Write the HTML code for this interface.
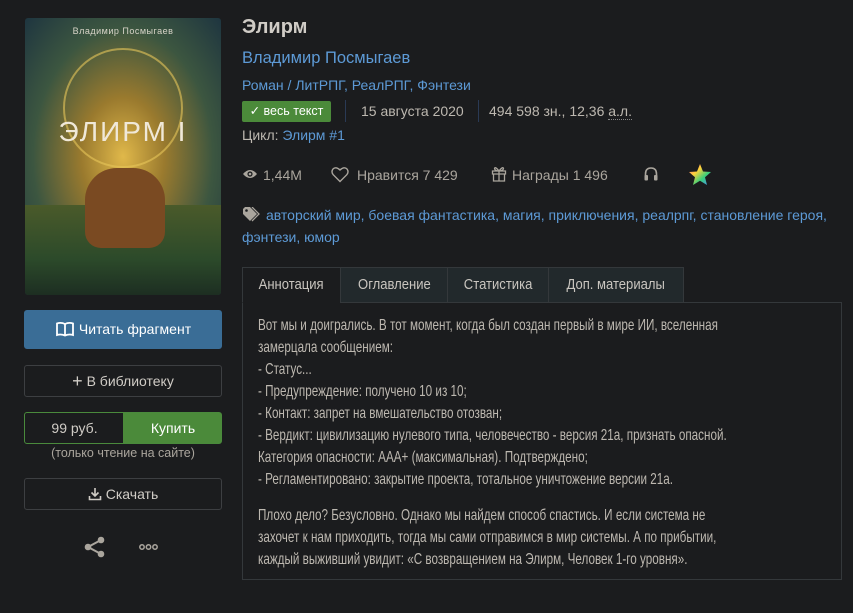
<!DOCTYPE html>
<html><head><meta charset="utf-8"><style>
*{margin:0;padding:0;box-sizing:border-box}
body{width:853px;height:613px;background:#1b1c1e;font-family:"Liberation Sans",sans-serif;color:#bdb8b0;position:relative;overflow:hidden;font-size:14px}
.a{position:absolute;white-space:nowrap}
.l{color:#5d9ad6}
.btn{position:absolute;left:24px;width:198px;border:1px solid #3d3f42;border-radius:3px;text-align:center;color:#d0ccc6}
.tab{position:absolute;top:267px;height:36px;border:1px solid #34383b;background:#22292c;line-height:34px;text-align:center;color:#c9c5bf;font-size:14.5px}
.tab span{display:inline-block;transform:scaleX(.9)}
.t{position:absolute;left:258px;white-space:nowrap;font-size:16px;color:#bdb8b0;transform:scaleX(.73);transform-origin:0 0}
</style></head><body>
<div class="a" style="left:25px;top:18px;width:196px;height:277px;border-radius:3px;overflow:hidden;background:radial-gradient(ellipse at 50% 50%,#e0b84a 0%,#9a7a2e 30%,#3c5640 65%,#1e3540 100%)">
<div style="position:absolute;left:0;right:0;bottom:0;height:90px;background:linear-gradient(#4a5a2a,#2c4a2a 60%,#1d2e22)"></div>
<div style="position:absolute;left:38px;top:30px;width:120px;height:120px;border:2px solid #e8c65a;border-radius:50%;opacity:.6"></div>
<div style="position:absolute;left:60px;top:150px;width:80px;height:80px;background:#7a4a22;border-radius:40% 40% 20% 20%"></div>
<div style="position:absolute;left:0;right:0;top:8px;text-align:center;font-size:9px;color:#d8d4c8;letter-spacing:.5px">Владимир Посмыгаев</div>
<div style="position:absolute;left:0;right:0;top:98px;text-align:center;font-size:28px;color:#f0e8d8;letter-spacing:2px;font-weight:300">ЭЛИРМ I</div>
</div>
<div class="btn" style="top:310px;height:39px;background:#3a6d96;border-color:#3a6d96;line-height:37px;color:#fff"><svg width="20" height="16" viewBox="0 0 20 16" style="vertical-align:-3px;margin-right:4px"><path d="M2 2.5Q6 1 10 3Q14 1 18 2.5V14Q14 12.8 10 14.5Q6 12.8 2 14Z M10 3V14.5" fill="none" stroke="#fff" stroke-width="1.8"/></svg>Читать фрагмент</div>
<div class="btn" style="top:365px;height:32px;line-height:30px"><span style="font-size:18px;vertical-align:-1px">+</span> В библиотеку</div>
<div class="btn" style="top:412px;height:32px;line-height:30px;border-color:#4a8a3c;background:linear-gradient(90deg,#1b1c1e 50%,#4b8a3a 50%)"><span style="position:absolute;left:0;width:99px">99 руб.</span><span style="position:absolute;left:99px;width:98px;color:#fff">Купить</span></div>
<div class="a" style="left:24px;width:198px;text-align:center;top:446px;font-size:12.5px;color:#aaa59d">(только чтение на сайте)</div>
<div class="btn" style="top:478px;height:32px;line-height:30px"><svg width="14" height="14" viewBox="0 0 14 14" style="vertical-align:-2px;margin-right:4px"><path d="M7 1V9M3.5 5.5L7 9L10.5 5.5M1.5 9V12.5H12.5V9" fill="none" stroke="#d0ccc6" stroke-width="1.6"/></svg>Скачать</div>
<svg class="a" style="left:84px;top:536px" width="22" height="22" viewBox="0 0 22 22"><g fill="#aaa59d"><circle cx="17" cy="4" r="3.3"/><circle cx="4" cy="11" r="3.3"/><circle cx="17" cy="18" r="3.3"/></g><path d="M17 4L4 11L17 18" stroke="#aaa59d" stroke-width="2" fill="none"/></svg>
<svg class="a" style="left:139px;top:543px" width="20" height="8" viewBox="0 0 20 8"><g fill="none" stroke="#aaa59d" stroke-width="1.5"><circle cx="3" cy="4" r="2.2"/><circle cx="9.5" cy="4" r="2.2"/><circle cx="16" cy="4" r="2.2"/></g></svg>

<div class="a" style="left:242px;top:16px;font-size:20px;font-weight:bold;color:#d0ccc6">Элирм</div>
<div class="a l" style="left:242px;top:49px;font-size:16.5px">Владимир Посмыгаев</div>
<div class="a l" style="left:242px;top:77px;font-size:14px">Роман / ЛитРПГ, РеалРПГ, Фэнтези</div>
<div class="a" style="left:242px;top:101px;width:89px;height:21px;background:#4b8a3a;border-radius:2px;color:#fff;font-size:12.5px;line-height:21px;text-align:center">✓ весь текст</div>
<div class="a" style="left:345px;top:100px;width:1px;height:22px;background:#2a3a55"></div>
<div class="a" style="left:361px;top:103px">15 августа 2020</div>
<div class="a" style="left:478px;top:100px;width:1px;height:22px;background:#2a3a55"></div>
<div class="a" style="left:489px;top:103px">494 598 зн., 12,36 <span style="border-bottom:1px dotted #888">а.л.</span></div>
<div class="a" style="left:242px;top:127px">Цикл: <span class="l">Элирм #1</span></div>

<svg class="a" style="left:242px;top:168px" width="16" height="12" viewBox="0 0 16 12"><path d="M1 6Q8 -2 15 6Q8 14 1 6Z" fill="#aaa59d"/><circle cx="8" cy="6" r="2.6" fill="#1b1c1e"/><circle cx="8" cy="6" r="1.3" fill="#aaa59d"/></svg>
<div class="a" style="left:263px;top:167px;color:#aaa59d">1,44M</div>
<svg class="a" style="left:331px;top:166px" width="18" height="17" viewBox="0 0 18 17"><path d="M9 15.5L2.2 8.7Q0 6 1.8 3.2Q4.8 0 9 4Q13.2 0 16.2 3.2Q18 6 15.8 8.7Z" fill="none" stroke="#aaa59d" stroke-width="1.4"/></svg>
<div class="a" style="left:357px;top:167px;color:#aaa59d">Нравится 7 429</div>
<svg class="a" style="left:491px;top:165px" width="16" height="17" viewBox="0 0 16 17"><path d="M1.5 6H14.5V9H1.5ZM2.5 9V16H13.5V9M8 6V16M8 6Q4 1 3.5 3.5Q4 6 8 6Q12 6 12.5 3.5Q12 1 8 6" fill="none" stroke="#aaa59d" stroke-width="1.3"/></svg>
<div class="a" style="left:512px;top:167px;color:#aaa59d">Награды 1 496</div>
<svg class="a" style="left:643px;top:166px" width="16" height="16" viewBox="0 0 16 16"><path d="M2.5 11V8Q2.5 2 8 2Q13.5 2 13.5 8V11" fill="none" stroke="#aaa59d" stroke-width="1.6"/><rect x="1.5" y="9" width="3.5" height="5.5" rx="1" fill="#aaa59d"/><rect x="11" y="9" width="3.5" height="5.5" rx="1" fill="#aaa59d"/></svg>
<svg class="a" style="left:688px;top:163px" width="24" height="23" viewBox="0 0 24 23"><defs><linearGradient id="g" x1="0" y1="0" x2="1" y2="1"><stop offset="0" stop-color="#ff5a8a"/><stop offset=".35" stop-color="#ffd23a"/><stop offset=".65" stop-color="#3ad07a"/><stop offset="1" stop-color="#4a8aff"/></linearGradient></defs><path d="M12 1L15 8.5L23 9L17 14.2L19 22L12 17.8L5 22L7 14.2L1 9L9 8.5Z" fill="url(#g)"/></svg>

<svg class="a" style="left:242px;top:207px" width="18" height="15" viewBox="0 0 18 15"><path d="M1 2V7L8 14L15 7L8 0H3Z" fill="#aaa59d"/><circle cx="4.5" cy="3.5" r="1.3" fill="#1b1c1e"/><path d="M10 0L17 7L10 14" fill="none" stroke="#aaa59d" stroke-width="1.3"/></svg>
<div class="a l" style="left:266px;top:207px">авторский мир, боевая фантастика, магия, приключения, реалрпг, становление героя,</div>
<div class="a l" style="left:242px;top:229px">фэнтези, юмор</div>

<div class="a" style="left:242px;top:302px;width:600px;height:278px;border:1px solid #34383b"></div>
<div class="tab" style="left:242px;width:99px;background:#1b1c1e;border-bottom-color:#1b1c1e"><span>Аннотация</span></div>
<div class="tab" style="left:340px;width:108px"><span>Оглавление</span></div>
<div class="tab" style="left:447px;width:102px"><span>Статистика</span></div>
<div class="tab" style="left:548px;width:136px"><span>Доп. материалы</span></div>

<div class="t" style="top:317px">Вот мы и доигрались. В тот момент, когда был создан первый в мире ИИ, вселенная</div>
<div class="t" style="top:339px">замерцала сообщением:</div>
<div class="t" style="top:361px">- Статус...</div>
<div class="t" style="top:383px">- Предупреждение: получено 10 из 10;</div>
<div class="t" style="top:405px">- Контакт: запрет на вмешательство отозван;</div>
<div class="t" style="top:427px">- Вердикт: цивилизацию нулевого типа, человечество - версия 21а, признать опасной.</div>
<div class="t" style="top:449px">Категория опасности: ААА+ (максимальная). Подтверждено;</div>
<div class="t" style="top:471px">- Регламентировано: закрытие проекта, тотальное уничтожение версии 21а.</div>
<div class="t" style="top:507px">Плохо дело? Безусловно. Однако мы найдем способ спастись. И если система не</div>
<div class="t" style="top:529px">захочет к нам приходить, тогда мы сами отправимся в мир системы. А по прибытии,</div>
<div class="t" style="top:551px">каждый выживший увидит: «С возвращением на Элирм, Человек 1-го уровня».</div>
</body></html>
